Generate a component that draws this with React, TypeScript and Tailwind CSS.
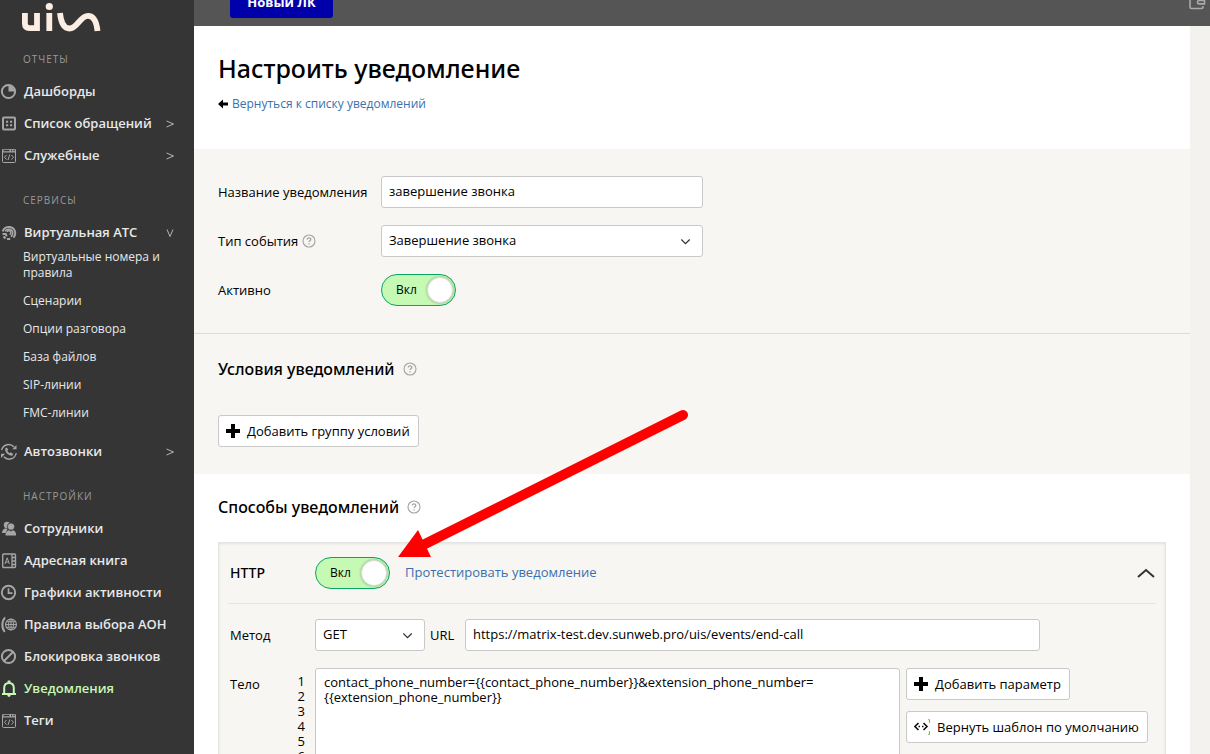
import { useState } from 'react';
import type { ReactNode } from 'react';

const icons: Record<string, ReactNode> = {
  dashboard: (
    <>
      <circle cx="8.5" cy="8.5" r="6.6" fill="none" strokeWidth="2" />
      <path d="M8.5 8.5V2.500A6 6 0 0 1 14.500 8.5z" fill="currentColor" stroke="none" />
    </>
  ),
  list: (
    <>
      <rect x="3" y="2.500" width="12" height="12" rx="1" fill="none" strokeWidth="2" />
      <path d="M6 6.800h2.200M10 6.800h2.200M6 10.300h2.200M10 10.300h2.200" strokeWidth="2" />
    </>
  ),
  code: (
    <>
      <rect x="2.5" y="2.5" width="13" height="13" rx="1" fill="none" />
      <path d="M2 4h14" strokeWidth="3" />
      <path d="M3.500 3.500h6M11 3.500h1.200M13.500 3.500h1.200" stroke="#353535" strokeWidth="1.500" />
      <path d="M6.500 8 4.500 10.300l2 2.200M11.500 8l2 2.300-2 2.200M9.800 7.500l-1.800 5.500" fill="none" />
    </>
  ),
  ats: (
    <>
      <path d="M2.700 7.500A6.500 6.500 0 0 1 14.700 6.500c1 2.500.6 5-1.200 7.200" fill="none" strokeWidth="1.900" />
      <path d="M5.100 7.300A4.200 4.200 0 0 1 12.700 8.100c.3 2-.4 3.500-1.600 4.800" fill="none" strokeWidth="1.600" />
      <path d="M7 7.900a2 2 0 1 1 2.500 2.600" fill="none" strokeWidth="1.600" />
      <path d="M2.500 10h3.200l1 2.400M3.500 12.500l2 1.900M7 15l3.200.1" fill="none" strokeWidth="2" />
    </>
  ),
  autocall: (
    <>
      <path d="M1.600 7A7.200 7.200 0 0 1 14 4M16.200 10A7.200 7.200 0 0 1 3.800 13.800" fill="none" strokeWidth="1.400" />
      <path d="M16.500 2v4.200h-4.200zM1 15v-4.200h4.200z" fill="currentColor" stroke="none" />
      <path
        d="M6.600 4.500 5.200 5.600c-.4 3.900 3 7.300 7 7.100l1-1.700-2.400-1.700-1.100 1C8.700 9.700 7.700 8.700 7.300 7.600l1-1z"
        fill="currentColor"
        stroke="none"
      />
    </>
  ),
  people: (
    <g fill="currentColor" stroke="none">
      <circle cx="7" cy="5" r="3.200" />
      <path d="M2 13c0-2.800 1.600-4.500 4-4.800l1.500 1.200-2 3.600z" />
      <circle cx="11" cy="6.600" r="3.700" stroke="#353535" strokeWidth=".8" />
      <path d="M5.500 15.500c0-3.400 1.600-5 3.700-5.300l1.800 1.400 1.800-1.400c2.100.3 3.300 1.900 3.300 5.300z" />
    </g>
  ),
  book: (
    <>
      <rect x="2.700" y="2" width="12.800" height="13.500" rx="1" fill="none" strokeWidth="1.400" />
      <path d="M12 2v13.500M12 5.500h3.500M12 9h3.500M12 12.500h3.500" strokeWidth="1.300" />
      <path d="m5 12 2.200-6.200L9.400 12M5.700 10h3" fill="none" />
    </>
  ),
  clock: (
    <>
      <circle cx="8.500" cy="8.500" r="6.700" fill="none" strokeWidth="1.900" />
      <path d="M8.500 4.200v5h4" fill="none" strokeWidth="1.700" />
    </>
  ),
  globe: (
    <>
      <path d="M5 .5C.4 3.500.2 13 4.200 16.500l1.300-1L4.200 12.500c-1-2.400-1-5.600.2-8.300L5.500 3z" fill="currentColor" stroke="none" />
      <circle cx="11" cy="8.500" r="5.400" fill="none" strokeWidth="1.200" />
      <ellipse cx="11" cy="8.500" rx="2.500" ry="5.400" fill="none" />
      <path d="M5.600 8.500h10.800M6.500 5.800h9M6.500 11.200h9M11 3v11" />
    </>
  ),
  block: (
    <>
      <circle cx="8.500" cy="8.500" r="6.600" fill="none" strokeWidth="2" />
      <path d="m4 13 9-9" strokeWidth="2" />
    </>
  ),
  bell: (
    <>
      <path d="M4.200 13.500V8c0-3.500 1.800-5 4.800-5s4.800 1.500 4.800 5v5.500" fill="none" strokeWidth="2" />
      <path d="M2 14h14" strokeWidth="2" />
      <path d="M7.200 2.500h3.600l-.6-2H7.800zM7 14.500h4l-1 2.300H8z" fill="currentColor" stroke="none" />
    </>
  ),
};

type Item = {
  label: string;
  icon: string;
  mark?: string;
  active?: boolean;
  children?: string[];
};

const menu: { title: string; items: Item[] }[] = [
  {
    title: 'ОТЧЕТЫ',
    items: [
      { label: 'Дашборды', icon: 'dashboard' },
      { label: 'Список обращений', icon: 'list', mark: '>' },
      { label: 'Служебные', icon: 'code', mark: '>' },
    ],
  },
  {
    title: 'СЕРВИСЫ',
    items: [
      {
        label: 'Виртуальная АТС',
        icon: 'ats',
        mark: 'v',
        children: [
          'Виртуальные номера и правила',
          'Сценарии',
          'Опции разговора',
          'База файлов',
          'SIP-линии',
          'FMC-линии',
        ],
      },
      { label: 'Автозвонки', icon: 'autocall', mark: '>' },
    ],
  },
  {
    title: 'НАСТРОЙКИ',
    items: [
      { label: 'Сотрудники', icon: 'people' },
      { label: 'Адресная книга', icon: 'book' },
      { label: 'Графики активности', icon: 'clock' },
      { label: 'Правила выбора АОН', icon: 'globe' },
      { label: 'Блокировка звонков', icon: 'block' },
      { label: 'Уведомления', icon: 'bell', active: true },
      { label: 'Теги', icon: 'code' },
    ],
  },
];

const MenuItem = ({ item }: { item: Item }) => (
  <li>
    <a
      href="#"
      className={`flex h-8 items-center pr-5 text-[13px] font-semibold ${
        item.active ? 'text-[#c5f9b4]' : 'text-[#e8e8e8]'
      }`}>
      <svg
        viewBox="0 0 17 17"
        className={`mr-[7px] size-[17px] shrink-0 ${item.active ? '' : 'text-[#a6a6a6]'}`}
        stroke="currentColor">
        {icons[item.icon]}
      </svg>
      <span className="flex flex-1 items-center justify-between pt-0.5 whitespace-nowrap">
        {item.label}
        {item.mark && (
          <svg
            viewBox="0 0 8 8"
            className={`size-2 ${item.mark === 'v' ? 'rotate-90' : ''}`}
            fill="none"
            stroke="#b5b5b5">
            <path d="m.5 1 7 3-7 3" />
          </svg>
        )}
      </span>
    </a>
    {item.children && (
      <ul className="flex flex-col gap-3 pt-px pr-6 pb-3.5 pl-[23px] text-xs leading-4 text-[#e8e8e8]">
        {item.children.map((child) => (
          <li key={child}>
            <a href="#" className="block">
              {child}
            </a>
          </li>
        ))}
      </ul>
    )}
  </li>
);

const Sidebar = () => (
  <nav className="w-[194px] shrink-0 bg-[#353535]">
    <div className="h-[43px]">
      <svg viewBox="0 0 101 43" className="h-[43px] w-[101px]" fill="none" stroke="#fdeee4" strokeWidth="5.800">
        <path d="M24.900 13v10.500q0 4.600 4.600 4.600H37V13M49.300 13v18" />
        <circle cx="49.300" cy="6.500" r="3.600" fill="#fdeee4" stroke="none" />
        <path d="M60 13C61 23 64.500 28.500 69.500 28.500 77.500 28.500 80 15.800 88 15.800 94 15.800 96.500 21 97.500 31" />
      </svg>
    </div>
    <div className="flex flex-col gap-[13px]">
      {menu.map((group) => (
        <section key={group.title}>
          <h2 className="flex h-8 items-center pl-[23px] text-[10px] tracking-widest text-[#999]">
            {group.title}
          </h2>
          <ul>
            {group.items.map((item) => (
              <MenuItem key={item.label} item={item} />
            ))}
          </ul>
        </section>
      ))}
    </div>
  </nav>
);

const Help = () => (
  <button type="button" aria-label="Справка" className="ml-1 shrink-0">
    <svg viewBox="0 0 14 14" className="size-3.5" fill="none" stroke="#a3a3a3">
      <circle cx="7" cy="7" r="6" strokeWidth="1.100" />
      <path d="M5.200 5.600c0-2.400 3.600-2.300 3.600-.2 0 1.300-1.800 1.300-1.800 2.700M7 9.300v1.300" strokeWidth="1.300" />
    </svg>
  </button>
);

const Toggle = ({ id }: { id: string }) => {
  const [on, setOn] = useState(true);
  return (
    <label
      htmlFor={id}
      className={`flex h-8 w-[75px] shrink-0 cursor-pointer items-center justify-between rounded-full border text-xs ${
        on ? 'border-[#0aa565] bg-[#c5f9b4] pr-0.5 pl-3.5' : 'flex-row-reverse border-[#c9c9c9] bg-white pr-2 pl-0.5'
      }`}>
      <input
        id={id}
        type="checkbox"
        className="sr-only"
        checked={on}
        onChange={(e) => setOn(e.target.checked)}
      />
      <span>{on ? 'Вкл' : 'Выкл'}</span>
      <span className="size-[26px] rounded-full border border-[#ddd] bg-white shadow-[0_0_2px_1px_rgba(0,0,0,0.150)]" />
    </label>
  );
};

const Select = ({ id, value, className }: { id: string; value: string; className: string }) => (
  <div className={`relative ${className}`}>
    <select
      id={id}
      defaultValue={value}
      className="h-8 w-full appearance-none rounded-[3px] border border-[#c9c9c9] bg-white px-[7px] text-[13px]">
      <option>{value}</option>
    </select>
    <svg
      viewBox="0 0 10 6"
      className="pointer-events-none absolute top-3.5 right-3 h-1.5 w-2.5"
      fill="none"
      stroke="#333"
      strokeWidth="1.300">
      <path d="m.3.500 4.200 4.200L8.700.5" />
    </svg>
  </div>
);

const Plus = () => (
  <svg viewBox="0 0 14 14" className="size-3.5" fill="none" stroke="#000" strokeWidth="4">
    <path d="M7 0v14M0 7h14" />
  </svg>
);

const Template = () => (
  <svg viewBox="0 0 16 16" className="size-4" fill="none" stroke="#111" strokeWidth="1.600">
    <path d="M4.500 4 1 7.500 4.500 11M9.500 4 13 7.500 9.500 11" />
    <path d="M4.500 7.500h1.500M8 7.500h1.500" />
    <path d="M14 .7h1.500V4M15.500 12v3.300H14" stroke="#6fbf44" strokeWidth="1" />
  </svg>
);

const Button = ({ icon, children }: { icon: ReactNode; children: ReactNode }) => (
  <button
    type="button"
    className="flex h-8 items-center gap-[7px] rounded-[3px] border border-[#c9c9c9] bg-white px-[7px] pr-2 text-[13px] whitespace-nowrap">
    {icon}
    <span className="pt-0.5">{children}</span>
  </button>
);

const inputStyle = 'h-8 rounded-[3px] border border-[#c9c9c9] bg-white px-[7px] pb-0.5 text-[13px]';
const headingFont = "font-['Noto_Sans','Open_Sans',sans-serif] font-medium";

const body =
  'contact_phone_number={{contact_phone_number}}&extension_phone_number={{extension_phone_number}}';

const App: React.FC = () => {
  return (
    <div className="flex h-screen overflow-hidden bg-[#f3f2ee] font-['Open_Sans','Noto_Sans',sans-serif] text-[13px] text-black">
      <Sidebar />
      <div className="flex min-w-0 flex-1 flex-col">
        <header className="flex h-[26px] shrink-0 items-end justify-between overflow-hidden bg-[#555] pl-9">
          <button
            type="button"
            className="mb-2 h-8 w-[103px] shrink-0 rounded-[3px] bg-[#0000ab] pt-0.5 text-[13px] font-bold text-white">
            Новый ЛК
          </button>
          <button type="button" aria-label="Баланс" className="mr-1 mb-4">
            <svg viewBox="0 0 18 18" className="size-[18px]" fill="none" stroke="#aaa" strokeWidth="1.600">
              <path d="M15 6V3.500H2V15q0 1.500 1.500 1.500h10q1.500 0 1.500-1.500v-1" />
              <path d="M16.500 8.500h-5q-2 0-2 1.700t2 1.700h5z" />
            </svg>
          </button>
        </header>

        <main className="relative mr-5 flex-1 overflow-hidden bg-white">
          <section className="h-[123px] px-6 pt-6">
            <h1 className={`text-[25px] leading-9 ${headingFont}`}>Настроить уведомление</h1>
            <a href="#" className="mt-2.5 flex items-center gap-1 text-xs leading-4 text-[#3a70b0]">
              <svg viewBox="0 0 10 10" className="size-2.5" fill="#000">
                <path d="M0 5 5 .5v3h5v3H5v3z" />
              </svg>
              Вернуться к списку уведомлений
            </a>
          </section>

          <section className="flex flex-col gap-[17px] border-b border-[#dcdcdc] bg-[#f7f6f2] px-6 py-[27px]">
            <div className="flex items-center">
              <label htmlFor="name" className="w-[163px] shrink-0 pt-0.5">
                Название уведомления
              </label>
              <input id="name" defaultValue="завершение звонка" className={`w-[322px] ${inputStyle}`} />
            </div>
            <div className="flex items-center">
              <div className="flex w-[163px] shrink-0 items-center">
                <label htmlFor="event" className="pt-0.5">
                  Тип события
                </label>
                <Help />
              </div>
              <Select id="event" value="Завершение звонка" className="w-[322px]" />
            </div>
            <div className="flex items-center">
              <label htmlFor="enabled" className="w-[163px] shrink-0 pt-0.5">
                Активно
              </label>
              <Toggle id="enabled" />
            </div>
          </section>

          <section className="bg-[#f7f6f2] px-6 pt-[23px] pb-[27px]">
            <div className="mb-[34px] flex items-center gap-1">
              <h2 className={`text-base ${headingFont}`}>Условия уведомлений</h2>
              <Help />
            </div>
            <Button icon={<Plus />}>Добавить группу условий</Button>
          </section>

          <section className="px-6 pt-[21px]">
            <div className="mb-[23px] flex items-center gap-1">
              <h2 className={`text-base ${headingFont}`}>Способы уведомлений</h2>
              <Help />
            </div>
            <div className="border border-[#e4e4e3] bg-[#f7f6f2] px-[9px] shadow-[inset_0_1px_3px_rgba(0,0,0,0.080)]">
              <div className="flex h-[61px] items-center border-b border-[#e4e4e2] pl-0.5">
                <h3 className={`w-[85px] shrink-0 text-sm ${headingFont}`}>HTTP</h3>
                <Toggle id="http" />
                <a href="#" className="ml-[15px] flex-1 text-[13px] text-[#3a70b0]">
                  Протестировать уведомление
                </a>
                <button type="button" aria-label="Свернуть" className="mr-px">
                  <svg viewBox="0 0 18 10" className="h-2.5 w-[18px]" fill="none" stroke="#333" strokeWidth="2">
                    <path d="m1 9 8-7 8 7" />
                  </svg>
                </button>
              </div>
              <div className="mt-[15px] flex items-center pl-0.5">
                <label htmlFor="method" className="w-[85px] shrink-0 pt-0.5">
                  Метод
                </label>
                <Select id="method" value="GET" className="w-[110px] shrink-0" />
                <label htmlFor="url" className="w-10 shrink-0 pt-0.5 pl-[5px]">
                  URL
                </label>
                <input
                  id="url"
                  defaultValue="https://matrix-test.dev.sunweb.pro/uis/events/end-call"
                  className={`w-full max-w-[575px] ${inputStyle}`}
                />
              </div>
              <div className="mt-[17px] flex items-start pl-0.5">
                <label htmlFor="body" className="shrink-0 leading-8">
                  Тело
                </label>
                <div className="flex min-w-0 flex-1 justify-end">
                  <ol className="mr-2.5 pt-1.5 text-right leading-[15px]">
                    {[1, 2, 3, 4, 5, 6].map((n) => (
                      <li key={n}>{n}</li>
                    ))}
                  </ol>
                  <textarea
                    id="body"
                    defaultValue={body}
                    className="h-40 w-[585px] resize-none rounded-[3px] border border-[#c9c9c9] bg-white px-2 py-1.5 leading-[15px]"
                  />
                </div>
                <div className="ml-1.5 flex w-[250px] shrink-0 flex-col items-start gap-[11px]">
                  <Button icon={<Plus />}>Добавить параметр</Button>
                  <Button icon={<Template />}>Вернуть шаблон по умолчанию</Button>
                </div>
              </div>
            </div>
          </section>

          <svg
            viewBox="0 0 300 160"
            className="pointer-events-none absolute top-[378px] left-[196px] h-40 w-[300px]"
            fill="#f00">
            <path d="m293 11L33 141" stroke="#f00" strokeWidth="10" strokeLinecap="round" />
            <path d="m8 153 20-27 13 27z" />
          </svg>
        </main>
      </div>
    </div>
  );
};

export default App;
